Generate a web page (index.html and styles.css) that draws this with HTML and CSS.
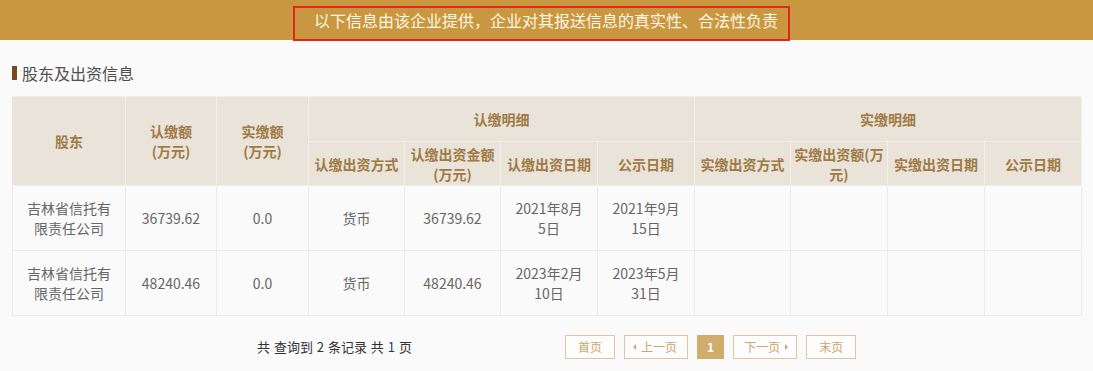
FILE: index.html
```html
<!DOCTYPE html>
<html lang="zh-CN">
<head>
<meta charset="utf-8">
<title>股东及出资信息</title>
<link rel="stylesheet" href="styles.css">
</head>
<body>
<div class="notice">
  <span class="notice-box">以下信息由该企业提供，企业对其报送信息的真实性、合法性负责</span>
</div>
<div class="section">
  <h2 class="section-title">股东及出资信息</h2>
  <table class="grid">
    <colgroup>
      <col class="c113"><col class="c91"><col class="c92"><col class="c96"><col class="c96"><col class="c97"><col class="c97"><col class="c96"><col class="c97"><col class="c97"><col class="c97">
    </colgroup>
    <thead>
      <tr class="h1">
        <th rowspan="2">股东</th>
        <th rowspan="2">认缴额<br>(万元)</th>
        <th rowspan="2">实缴额<br>(万元)</th>
        <th colspan="4">认缴明细</th>
        <th colspan="4">实缴明细</th>
      </tr>
      <tr class="h2">
        <th>认缴出资方式</th>
        <th>认缴出资金额<br>(万元)</th>
        <th>认缴出资日期</th>
        <th>公示日期</th>
        <th>实缴出资方式</th>
        <th>实缴出资额(万<br>元)</th>
        <th>实缴出资日期</th>
        <th>公示日期</th>
      </tr>
    </thead>
    <tbody>
      <tr>
        <td>吉林省信托有<br>限责任公司</td>
        <td>36739.62</td>
        <td>0.0</td>
        <td>货币</td>
        <td>36739.62</td>
        <td>2021年8月<br>5日</td>
        <td>2021年9月<br>15日</td>
        <td></td><td></td><td></td><td></td>
      </tr>
      <tr>
        <td>吉林省信托有<br>限责任公司</td>
        <td>48240.46</td>
        <td>0.0</td>
        <td>货币</td>
        <td>48240.46</td>
        <td>2023年2月<br>10日</td>
        <td>2023年5月<br>31日</td>
        <td></td><td></td><td></td><td></td>
      </tr>
    </tbody>
  </table>
  <div class="pager">
    <div class="pager-info">共 查询到 2 条记录 共 <span class="num">1</span> 页</div>
    <div class="pager-btns">
      <a class="pbtn">首页</a>
      <a class="pbtn arrow-l"><span class="tri-l"></span>上一页</a>
      <a class="pbtn current">1</a>
      <a class="pbtn arrow-r">下一页<span class="tri-r"></span></a>
      <a class="pbtn">末页</a>
    </div>
  </div>
</div>
</body>
</html>
```

FILE: styles.css
```css
html, body {
  margin: 0;
  padding: 0;
}
body {
  background: #fafafa;
  font-family: "Noto Sans CJK SC", "Noto Sans", sans-serif;
  color: #666;
  width: 1093px;
  height: 371px;
  overflow: hidden;
}
.notice {
  height: 40px;
  background: #c8973f;
  box-sizing: border-box;
  padding-top: 6px;
  display: flex;
  justify-content: center;
}
.notice-box {
  display: block;
  box-sizing: border-box;
  height: 35px;
  border: 2px solid #e2261c;
  padding: 2px 10px 0 19px;
  margin-right: 10px;
  color: #fff7e6;
  font-size: 16px;
  line-height: 20px;
  white-space: nowrap;
}
.section {
  padding: 23px 12px 0 12px;
}
.section-title {
  margin: 0 0 13px 0;
  font-size: 16px;
  font-weight: normal;
  line-height: 20px;
  color: #4f4f4f;
  display: flex;
  align-items: center;
}
.section-title::before {
  content: "";
  display: block;
  width: 5px;
  height: 14px;
  background: #7a4a1e;
  margin-right: 5px;
}
.grid {
  width: 1069px;
  border-collapse: collapse;
  table-layout: fixed;
  font-size: 14px;
}
.c113 { width: 113px; }
.c91 { width: 91px; }
.c92 { width: 92px; }
.c96 { width: 96px; }
.c97 { width: 97px; }
.grid th {
  background: #e9e3da;
  color: #a07a44;
  font-weight: bold;
  border: 1px solid #f2eee8;
  line-height: 20px;
  padding: 0 2px;
  text-align: center;
}
.grid .h1 th { height: 44px; }
.grid .h2 th { height: 43px; }
.grid thead tr:first-child th:first-child { border-left-color: #e9e3da; }
.grid td {
  border: 1px solid #ececec;
  text-align: center;
  line-height: 20px;
  height: 64px;
  padding: 0 2px;
  color: #666;
  background: #fafafa;
}
.pager {
  display: flex;
  align-items: center;
  padding: 19px 0 0 245px;
}
.pager-info {
  width: 308px;
  font-size: 13px;
  color: #333;
  line-height: 24px;
  word-spacing: 1px;
}
.pager-info .num { color: #1f3a66; }
.pager-btns {
  display: flex;
  gap: 9px;
}
.pbtn {
  display: flex;
  align-items: center;
  height: 24px;
  box-sizing: border-box;
  border: 1px solid #dcc7a2;
  padding: 0 12px;
  font-size: 12px;
  color: #c9a66b;
  background: #fdfdfd;
  line-height: 22px;
}
.pbtn.arrow-l { padding: 0 10px 0 8px; }
.pbtn.arrow-r { padding: 0 8px 0 10px; }
.pbtn.current {
  background: #d1ad6b;
  border-color: #d1ad6b;
  color: #fff;
  padding: 0 9px;
  font-weight: bold;
}
.tri-l, .tri-r {
  display: block;
  width: 0;
  height: 0;
  border-top: 3px solid transparent;
  border-bottom: 3px solid transparent;
}
.tri-l {
  border-right: 3px solid #c9a66b;
  margin-right: 5px;
}
.tri-r {
  border-left: 3px solid #c9a66b;
  margin-left: 5px;
}
```
